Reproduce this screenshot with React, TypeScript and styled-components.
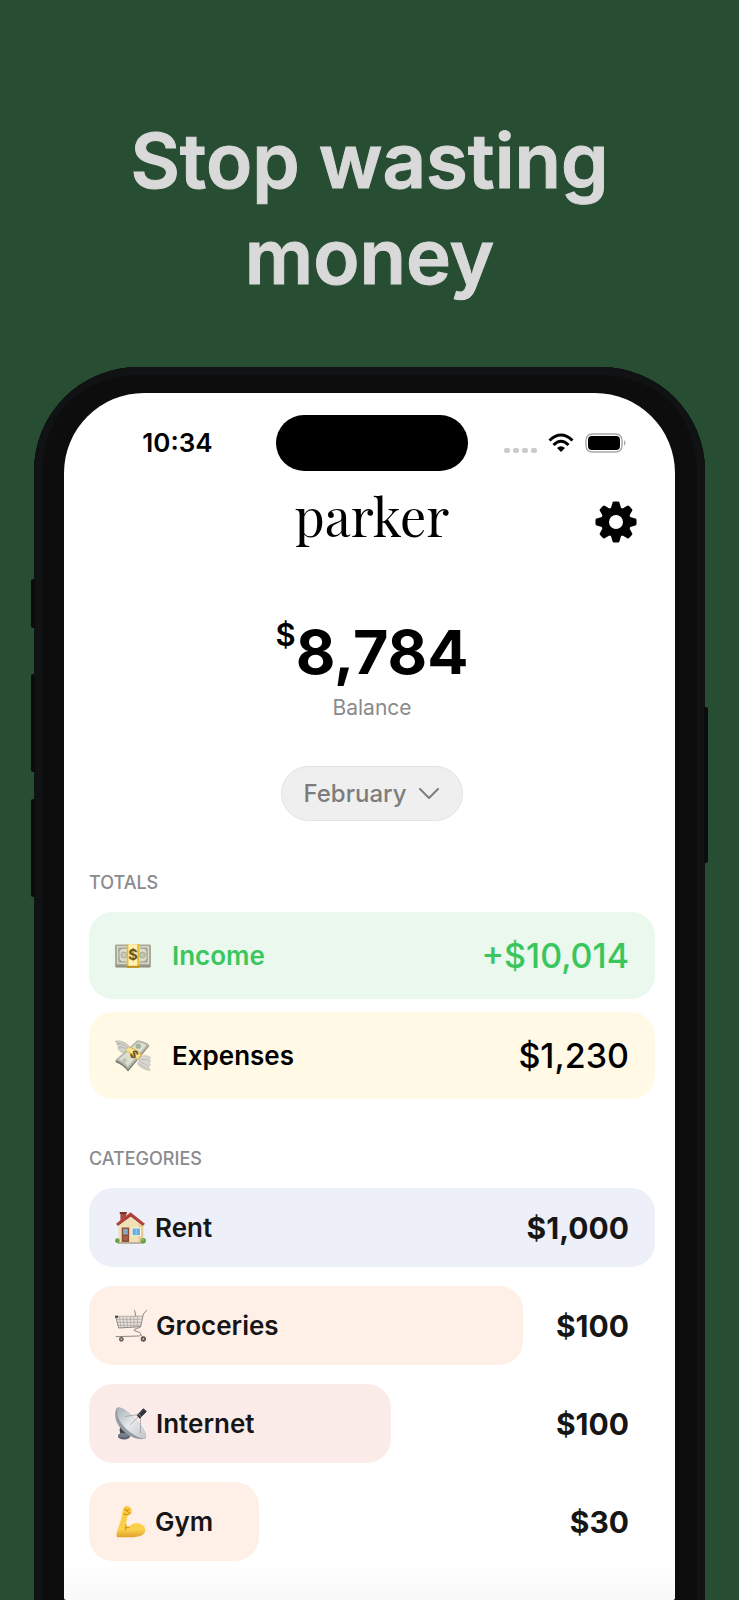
import type { ReactNode } from "react";
import styled, { createGlobalStyle } from "styled-components";

const CashIcon = () => (
    <svg width="36" height="24" viewBox="0 0 110 72" aria-hidden="true">
        <rect x="1" y="4" width="108" height="67" rx="3" fill="#8d8c80" />
        <rect x="1" y="1" width="108" height="64" rx="2" fill="#aaa999" />
        <rect x="6" y="6" width="98" height="54" fill="#dddccb" />
        <path
            d="M12 12h24M12 54h24M12 12v42M98 12H76M98 54H76M98 12v42"
            stroke="#8f9181"
            strokeWidth="3"
            fill="none"
        />
        <circle cx="27" cy="33" r="9" fill="#c8cab8" stroke="#989b8a" strokeWidth="2" />
        <circle cx="84" cy="33" r="9" fill="#b8cbb0" stroke="#989b8a" strokeWidth="2" />
        <path d="M12 20l8-8M12 46l8 8M98 20l-8-8M98 46l-8 8" stroke="#8f9181" strokeWidth="3" />
        <rect x="36" y="0" width="38" height="72" rx="2" fill="#e9b92f" />
        <rect x="41" y="0" width="27" height="67" fill="#fff0b5" />
        <rect x="36" y="66" width="38" height="6" fill="#bf8f20" />
        <text x="55" y="49" textAnchor="middle" fontSize="44" fontWeight="700" fill="#67551f">
            $
        </text>
    </svg>
);

const FlyingCashIcon = () => (
    <svg width="36" height="32" viewBox="0 0 110 96" aria-hidden="true">
        <path
            d="M1 3c12-3 27 1 37 10l9 11-18 14C16 36 10 29 9 22l8 1C9 19 6 14 6 9l8 2C7 9 3 6 1 3z"
            fill="#d3d3cd"
            stroke="#a9aaa3"
            strokeWidth="2"
        />
        <path d="M12 9c12 2 20 7 28 14M15 20c8 0 14 3 20 8" stroke="#a3a49c" strokeWidth="2" fill="none" />
        <path
            d="M78 49c12-4 24-2 31 4l-5 4 5 7-6 2 5 10-7 2 6 14c-17-2-33-10-38-20z"
            fill="#d9d8d1"
            stroke="#b5b5ac"
            strokeWidth="2"
        />
        <path d="M78 58l25 2M76 65l24 12M73 71l26 17" stroke="#aaaaa1" strokeWidth="2" />
        <path d="M2 62L68 2c13 1 27 6 37 15L40 95C30 82 16 72 2 67z" fill="#777a72" />
        <path d="M2 60L68 0c14 1 27 6 37 14L40 89C30 76 16 67 2 60z" fill="#b3b7aa" />
        <path d="M11 59L69 6c10 1 19 4 27 9L39 80C32 70 22 63 11 59z" fill="#dddfd3" />
        <circle cx="71" cy="18" r="8" fill="#a3b299" />
        <circle cx="29" cy="62" r="7" fill="#bcc3b4" />
        <path d="M30 33l15-13c14 5 28 13 37 25L68 61c-9-12-23-23-38-28z" fill="#e3b638" />
        <path d="M33 31l10-9c14 5 27 13 35 24l-9 11c-9-12-21-21-36-26z" fill="#f9e49c" />
        <text
            x="0"
            y="0"
            transform="translate(50 51) rotate(45)"
            fontSize="32"
            fontWeight="700"
            textAnchor="middle"
            fill="#625122"
        >
            $
        </text>
    </svg>
);

const HouseIcon = () => (
    <svg width="31" height="32" viewBox="0 0 92 95" aria-hidden="true">
        <rect x="16" y="3" width="17" height="30" fill="#a84842" />
        <rect x="14" y="0" width="21" height="6" fill="#7e322e" />
        <path d="M47 6L10 36v54h74V36z" fill="#f1dfb6" />
        <path d="M84 38v52H70V28z" fill="#e4cc9b" />
        <path d="M46 1L3 35l5 6L47 13l36 28 6-6z" fill="#b8433e" />
        <path d="M8 40l39-29 36 29" fill="none" stroke="#7f2f2c" strokeWidth="2" />
        <rect x="20" y="46" width="22" height="44" fill="#8c4c38" />
        <rect x="24" y="50" width="14" height="17" fill="#83aac2" />
        <rect x="24" y="71" width="14" height="14" fill="#a66048" />
        <rect x="49" y="46" width="28" height="26" fill="#fff7df" />
        <rect x="52" y="49" width="22" height="20" fill="#64aee2" />
        <path d="M63 49v20" stroke="#b9ddf0" strokeWidth="2" />
        <rect x="8" y="89" width="77" height="6" fill="#bcb2a1" />
        <circle cx="7" cy="85" r="7" fill="#6b9f45" />
        <circle cx="84" cy="85" r="8" fill="#6b9f45" />
        <circle cx="82" cy="82" r="4" fill="#92bd5c" />
    </svg>
);

const CartIcon = () => (
    <svg width="32" height="32" viewBox="0 0 96 96" fill="none" aria-hidden="true">
        <path d="M2 18l80-2-5 34-66 4z" fill="#d9d5d0" fillOpacity="0.6" />
        <path
            d="M2 19h80M4 28h76M7 37h72M9 46h68M13 19l5 34M24 19l4 34M35 19l3 33M46 19l2 33M57 19v32M68 18l-1 32"
            stroke="#a5a09c"
            strokeWidth="2"
        />
        <path
            d="M2 19l9 35 66-4L85 12 95 1M59 2l3 15M77 50c-9 8-18 4-20 11 8 5 19 4 20 10 1 5-2 7-7 7L3 80M20 80v9M78 75l7 8"
            stroke="#8b8783"
            strokeWidth="3"
            strokeLinecap="round"
        />
        <path d="M0 17h9v6H1z" fill="#3e3b39" />
        <circle cx="19" cy="88" r="7" fill="#5e5954" />
        <circle cx="19" cy="88" r="3" fill="#c2bbb3" />
        <circle cx="85" cy="87" r="8" fill="#5e5954" />
        <circle cx="85" cy="87" r="3" fill="#c2bbb3" />
    </svg>
);

const DishIcon = () => (
    <svg width="32" height="33" viewBox="0 0 96 98" aria-hidden="true">
        <defs>
            <linearGradient id="dish" x1="0" y1="0" x2="1" y2="1">
                <stop offset="0" stopColor="#a9afb5" />
                <stop offset="0.5" stopColor="#e6e9ec" />
                <stop offset="1" stopColor="#bfc4c9" />
            </linearGradient>
        </defs>
        <path d="M16 50l24 18 4 20H18l-4-19z" fill="#3c4248" />
        <ellipse cx="27" cy="88" rx="18" ry="9" fill="#58616a" />
        <ellipse cx="27" cy="84" rx="18" ry="7" fill="#747e88" />
        <path d="M6 2C-4 17-1 45 20 67c20 21 49 33 70 28 9-7-2-32-25-56C43 15 17-3 6 2z" fill="#949ba2" />
        <path d="M9 2C2 15 9 39 29 60c21 22 48 36 62 34 8-7-4-32-26-55C43 15 18-3 9 2z" fill="url(#dish)" />
        <path d="M77 21L46 53M77 21L29 28M77 21l-1 58" stroke="#8b9299" strokeWidth="2" />
        <path d="M67 25l18-20 9 8-20 20z" fill="#30353a" stroke="#30353a" strokeWidth="3" strokeLinejoin="round" />
        <path d="M68 18l12 12" stroke="#8d949a" strokeWidth="3" />
    </svg>
);

const ArmIcon = () => (
    <svg width="31" height="32" viewBox="-4 0 92 95" aria-hidden="true">
        <defs>
            <linearGradient id="skin" x1="0" y1="0" x2="0" y2="1">
                <stop offset="0" stopColor="#fbc93d" />
                <stop offset="0.75" stopColor="#fcd04c" />
                <stop offset="1" stopColor="#dfa026" />
            </linearGradient>
        </defs>
        <path
            d="M19 12C22 1 31-2 38 2c7 3 9 11 6 20l-12 9-3 25c3 4 6 6 9 6 5-8 14-12 23-11 15 1 25 10 25 21 0 13-17 21-44 21H4c-4-2-4-6-3-11 3-19 14-33 18-70z"
            fill="url(#skin)"
        />
        <path
            d="M26 9c3 6 10 5 12 1M22 23c7 4 14 3 20-3M29 13l7 6M29 56c-2 6-3 11-1 15M38 62c-4 3-8 3-11 1"
            stroke="#cf8f20"
            strokeWidth="3"
            fill="none"
            strokeLinecap="round"
        />
    </svg>
);

const GearIcon = () => (
    <svg width="42" height="42" viewBox="-21 -21 42 42" aria-hidden="true">
        {[0, 45, 90, 135, 180, 225, 270, 315].map((angle) => (
            <path
                key={angle}
                d="M-4 -12L-2 -19H2L4 -12Z"
                transform={`rotate(${angle})`}
                stroke="#000"
                strokeWidth="3"
                strokeLinejoin="round"
            />
        ))}
        <circle r="11" fill="none" stroke="#000" strokeWidth="8" />
    </svg>
);

const WifiIcon = () => (
    <svg width="26" height="20" viewBox="0 0 26 20" fill="none" aria-hidden="true">
        <path d="M1.5 7.5Q13-3.5 24.5 7.5" stroke="#000" strokeWidth="3" />
        <path d="M5.5 12Q13 4.5 20.5 12" stroke="#000" strokeWidth="3" />
        <path d="M13 19l-4-4q4-3.500 8 0z" fill="#000" />
    </svg>
);

const BatteryIcon = () => (
    <svg width="42" height="20" viewBox="0 0 42 20" aria-hidden="true">
        <rect x="1" y="1" width="36" height="18" rx="6" fill="none" stroke="#a6a6a6" strokeWidth="1.400" />
        <rect x="3" y="3" width="32" height="14" rx="4" fill="#000" />
        <path d="M39 7q3 3 0 6z" fill="#a6a6a6" />
    </svg>
);

const ChevronIcon = () => (
    <svg width="20" height="12" viewBox="0 0 20 12" fill="none" aria-hidden="true">
        <path d="M1 1l9 9 9-9" stroke="#7d7d7d" strokeWidth="2" strokeLinecap="round" strokeLinejoin="round" />
    </svg>
);

type Category = {
    name: string;
    amount: string;
    share: number;
    color: string;
    icon: ReactNode;
};

const categories: Category[] = [
    { name: "Rent", amount: "$1,000", share: 100, color: "#edf0f9", icon: <HouseIcon /> },
    { name: "Groceries", amount: "$100", share: 76.7, color: "#fef0e7", icon: <CartIcon /> },
    { name: "Internet", amount: "$100", share: 53.4, color: "#fcece9", icon: <DishIcon /> },
    { name: "Gym", amount: "$30", share: 30, color: "#fef0e6", icon: <ArmIcon /> },
];

const months = [
    "January",
    "February",
    "March",
    "April",
    "May",
    "June",
    "July",
    "August",
    "September",
    "October",
    "November",
    "December",
];

const App = () => {
    return (
        <>
            <GlobalStyle />
            <Page>
                <Headline>
                    Stop wasting
                    <br />
                    money
                </Headline>
                <Phone>
                    <SideButton $side="left" $top={212} $height={49} />
                    <SideButton $side="left" $top={307} $height={98} />
                    <SideButton $side="left" $top={432} $height={98} />
                    <SideButton $side="right" $top={340} $height={156} />
                    <Screen>
                        <StatusBar>
                            <Time>10:34</Time>
                            <Island />
                            <StatusIcons>
                                <Dots>
                                    <i />
                                    <i />
                                    <i />
                                    <i />
                                </Dots>
                                <WifiIcon />
                                <BatteryIcon />
                            </StatusIcons>
                        </StatusBar>
                        <Header>
                            <Logo>parker</Logo>
                            <SettingsButton aria-label="Settings">
                                <GearIcon />
                            </SettingsButton>
                        </Header>
                        <Balance>
                            <Amount>
                                <Currency>$</Currency>8,784
                            </Amount>
                            <BalanceLabel>Balance</BalanceLabel>
                            <MonthPicker>
                                <MonthSelect aria-label="Month" defaultValue="February">
                                    {months.map((month) => (
                                        <option key={month}>{month}</option>
                                    ))}
                                </MonthSelect>
                                <ChevronIcon />
                            </MonthPicker>
                        </Balance>
                        <Section>
                            <SectionTitle>TOTALS</SectionTitle>
                            <List $gap={13}>
                                <TotalRow $background="#eaf8ee" $color="#3ac65c">
                                    <CashIcon />
                                    <TotalName>Income</TotalName>
                                    <TotalAmount>+$10,014</TotalAmount>
                                </TotalRow>
                                <TotalRow $background="#fff9e5" $color="#000">
                                    <FlyingCashIcon />
                                    <TotalName>Expenses</TotalName>
                                    <TotalAmount>$1,230</TotalAmount>
                                </TotalRow>
                            </List>
                        </Section>
                        <Section>
                            <SectionTitle>CATEGORIES</SectionTitle>
                            <List $gap={19}>
                                {categories.map((category) => (
                                    <CategoryRow key={category.name} $color={category.color} $share={category.share}>
                                        {category.icon}
                                        <CategoryName>{category.name}</CategoryName>
                                        <CategoryAmount>{category.amount}</CategoryAmount>
                                    </CategoryRow>
                                ))}
                            </List>
                        </Section>
                    </Screen>
                </Phone>
            </Page>
        </>
    );
};

const GlobalStyle = createGlobalStyle`
    * {
        box-sizing: border-box;
    }
    body {
        margin: 0;
        background: #274d33;
        font-family: Inter, "Liberation Sans", sans-serif;
    }
    svg {
        display: block;
        flex-shrink: 0;
    }
`;

const Page = styled.main`
    display: flex;
    flex-direction: column;
    min-height: 100vh;
    padding: 112px 34px 0;
    overflow: hidden;
`;
const Headline = styled.h1`
    margin: 0 0 63px;
    color: #d9d9d9;
    font-size: 76px;
    font-weight: 600;
    line-height: 96px;
    text-align: center;
    -webkit-text-stroke: 1px #d9d9d9;
`;

const Phone = styled.div`
    position: relative;
    display: flex;
    flex: 1;
    padding: 26px 30px 0;
    background: #0d0d0d;
    border-radius: 104px 104px 0 0;
    box-shadow: inset 0 8px 0 #101214, inset 8px 0 0 #101214, inset -8px 0 0 #101214;
`;
const SideButton = styled.span<{ $side: "left" | "right"; $top: number; $height: number }>`
    position: absolute;
    top: ${(props) => props.$top}px;
    ${(props) => props.$side}: -3px;
    width: 4px;
    height: ${(props) => props.$height}px;
    background: #0b0c0d;
    border-radius: 2px;
`;
const Screen = styled.div`
    flex: 1;
    min-width: 0;
    padding: 22px 20px 37px 25px;
    background: linear-gradient(to top, #f9f9f9, #fff 36px);
    border-radius: 80px 80px 2px 2px;
`;

const StatusBar = styled.div`
    display: grid;
    grid-template-columns: 1fr 192px 1fr;
    align-items: center;
`;
const Time = styled.time`
    padding-right: 10px;
    font-size: 26px;
    font-weight: 600;
    line-height: 34px;
    text-align: center;
`;
const Island = styled.div`
    height: 56px;
    background: #000;
    border-radius: 28px;
`;
const StatusIcons = styled.div`
    display: flex;
    align-items: center;
    justify-content: flex-end;
    gap: 11px;
    padding-right: 28px;
`;
const Dots = styled.div`
    display: flex;
    gap: 3px;
    padding-top: 14px;

    i {
        width: 6px;
        height: 5px;
        background: #cbcbcb;
        border-radius: 2px;
    }
`;

const Header = styled.header`
    display: grid;
    grid-template-columns: 1fr auto 1fr;
    align-items: center;
    margin-top: 9px;
`;
const Logo = styled.h2`
    grid-column: 2;
    margin: 0;
    font-family: "Playfair Display", "Liberation Serif", serif;
    font-size: 52px;
    font-weight: 400;
    line-height: 72px;
`;
const SettingsButton = styled.button`
    justify-self: end;
    margin-right: 12px;
    padding: 12px 6px 0;
    background: none;
    border: 0;
    cursor: pointer;
`;

const Balance = styled.section`
    display: flex;
    flex-direction: column;
    align-items: center;
    margin: 70px 0 50px;
`;
const Amount = styled.div`
    display: flex;
    align-items: flex-start;
    font-size: 61px;
    font-weight: 700;
    line-height: 60px;
`;
const Currency = styled.span`
    font-size: 31px;
    font-weight: 600;
    line-height: 26px;
`;
const BalanceLabel = styled.p`
    margin: 12px 0 44px;
    color: #8a8a8e;
    font-size: 21px;
    line-height: 28px;
`;
const MonthPicker = styled.div`
    display: flex;
    align-items: center;
    gap: 12px;
    height: 55px;
    padding: 0 23px 0 21px;
    background: #efefef;
    border: 1px solid #e3e3e3;
    border-radius: 28px;
`;
const MonthSelect = styled.select`
    appearance: none;
    field-sizing: content;
    padding: 0;
    background: none;
    border: 0;
    outline: none;
    color: #7d7d7d;
    font-family: inherit;
    font-size: 24px;
    font-weight: 500;
`;

const Section = styled.section`
    margin-top: 48px;
`;
const SectionTitle = styled.h3`
    margin: 0 0 17px;
    color: #8a8a8e;
    font-size: 18px;
    font-weight: 500;
    line-height: 24px;
`;
const List = styled.ul<{ $gap: number }>`
    display: flex;
    flex-direction: column;
    gap: ${(props) => props.$gap}px;
    margin: 0;
    padding: 0;
    list-style: none;
`;
const TotalRow = styled.li<{ $background: string; $color: string }>`
    display: flex;
    align-items: center;
    gap: 21px;
    height: 87px;
    padding: 0 26px;
    background: ${(props) => props.$background};
    border-radius: 24px;
    color: ${(props) => props.$color};
`;
const TotalName = styled.span`
    font-size: 26px;
    font-weight: 600;
`;
const TotalAmount = styled.span`
    margin-left: auto;
    font-size: 34px;
    font-weight: 500;
`;
const CategoryRow = styled.li<{ $color: string; $share: number }>`
    position: relative;
    z-index: 0;
    display: flex;
    align-items: center;
    gap: 9px;
    height: 79px;
    padding: 0 26px;
    color: #161616;

    &::before {
        content: "";
        position: absolute;
        inset: 0 auto 0 0;
        z-index: -1;
        width: ${(props) => props.$share}%;
        background: ${(props) => props.$color};
        border-radius: 24px;
    }
`;
const CategoryName = styled.span`
    font-size: 26px;
    font-weight: 600;
`;
const CategoryAmount = styled.span`
    margin-left: auto;
    font-size: 30px;
    font-weight: 700;
`;

export default App;
